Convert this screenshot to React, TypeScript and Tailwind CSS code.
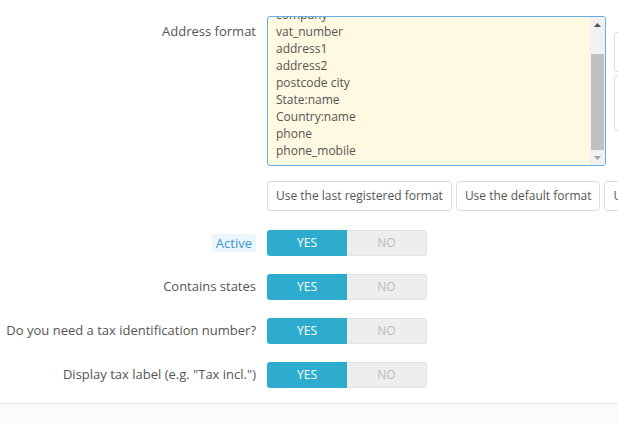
const formatLines = [
  'company',
  'vat_number',
  'address1',
  'address2',
  'postcode city',
  'State:name',
  'Country:name',
  'phone',
  'phone_mobile',
];

const toggles = [
  { label: 'Active', highlight: true },
  { label: 'Contains states' },
  { label: 'Do you need a tax identification number?' },
  { label: 'Display tax label (e.g. "Tax incl.")' },
];

function Switch() {
  return (
    <div className="flex h-[26px] w-[160px] text-[12px] uppercase">
      <div className="flex w-[80px] items-center justify-center rounded-l-[3px] bg-[#2eacce] text-white">
        Yes
      </div>
      <div className="flex w-[80px] items-center justify-center rounded-r-[3px] border border-l-0 border-[#e2e2e2] bg-[#eeeeee] text-[#bbbbbb]">
        No
      </div>
    </div>
  );
}

export default function App() {
  return (
    <div
      className="w-[618px] h-[424px] overflow-hidden bg-white text-[13px] text-[#555]"
      style={{ fontFamily: '"Open Sans", "Liberation Sans", sans-serif' }}
    >
      {/* Address format */}
      <div className="flex pt-[16px]">
        <div className="w-[256px] shrink-0 pt-[7px] text-right leading-[17px]">Address format</div>
        <div className="ml-[11px] flex shrink-0">
          <div className="flex h-[150px] w-[339px] overflow-hidden rounded-[3px] border border-[#66afe9] bg-[#fef9e0]">
            <div className="flex-1 overflow-hidden pl-[8px]">
              <div className="-mt-[11px] text-[12px] leading-[17px]">
                {formatLines.map((line) => (
                  <div key={line}>{line}</div>
                ))}
              </div>
            </div>
            <div className="flex w-[15px] flex-col bg-[#f1f1f1]">
              <div className="flex h-[15px] items-center justify-center">
                <svg width="7" height="4" viewBox="0 0 7 4">
                  <path d="M0 4 L3.5 0 L7 4 Z" fill="#505050" />
                </svg>
              </div>
              <div className="h-[22px]" />
              <div className="mx-[1px] h-[96px] bg-[#c1c1c1]" />
              <div className="flex-1" />
              <div className="flex h-[15px] items-center justify-center">
                <svg width="7" height="4" viewBox="0 0 7 4">
                  <path d="M0 0 L3.5 4 L7 0 Z" fill="#a3a3a3" />
                </svg>
              </div>
            </div>
          </div>
          <div className="ml-[8px] flex flex-col gap-[3px] pt-[16px]">
            <div className="h-[40px] w-[40px] rounded-[3px] border border-[#dddddd] bg-white" />
            <div className="h-[56px] w-[40px] rounded-[3px] border border-[#dddddd] bg-white" />
          </div>
        </div>
      </div>

      {/* Format buttons */}
      <div className="mt-[15px] flex whitespace-nowrap pl-[267px] text-[12px]">
        <button className="h-[30px] shrink-0 rounded-[3px] border border-[#dddddd] bg-white px-[8px] text-[#555]">
          Use the last registered format
        </button>
        <button className="ml-[4px] h-[30px] shrink-0 rounded-[3px] border border-[#dddddd] bg-white px-[8px] text-[#555]">
          Use the default format
        </button>
        <button className="ml-[4px] h-[30px] shrink-0 rounded-[3px] border border-[#dddddd] bg-white px-[8px] text-[#555]">
          Use my current modified format
        </button>
      </div>

      {/* Toggles */}
      <div className="mt-[19px] flex flex-col gap-[18px]">
        {toggles.map((t) => (
          <div key={t.label} className="flex items-center">
            <div className="flex w-[256px] shrink-0 justify-end whitespace-nowrap">
              {t.highlight ? (
                <span className="rounded-[2px] bg-[#eaf5fc] px-[4px] leading-[18px] text-[#3a96cf]">{t.label}</span>
              ) : (
                <span>{t.label}</span>
              )}
            </div>
            <div className="ml-[11px]">
              <Switch />
            </div>
          </div>
        ))}
      </div>

      {/* Footer */}
      <div className="mt-[15px] h-[40px] border-t border-[#e8e8e8] bg-[#fafbfc]" />
    </div>
  );
}
